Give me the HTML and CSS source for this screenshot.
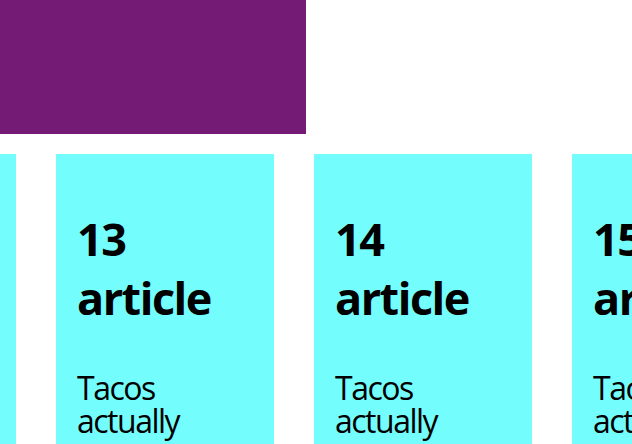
FILE: index.html
```html
<!DOCTYPE html>
<html>
<head>
<meta charset="utf-8">
<link rel="stylesheet" href="styles.css">
</head>
<body>
<div class="banner"></div>
<div class="track">
  <article class="card"><h2>12 article</h2><p>Tacos actually</p></article>
  <article class="card"><h2>13 article</h2><p>Tacos actually</p></article>
  <article class="card"><h2>14 article</h2><p>Tacos actually</p></article>
  <article class="card"><h2>15 article</h2><p>Tacos actually</p></article>
</div>
</body>
</html>
```
FILE: styles.css
```css
html, body { margin: 0; padding: 0; background: #fff; }
body { font-family: "Open Sans", "Noto Sans", sans-serif; color: #000; width: 632px; height: 444px; overflow: hidden; }
.banner { width: 306px; height: 134px; background: #741b76; }
.track { display: flex; gap: 40px; margin-top: 20px; margin-left: -202px; }
.card { flex: 0 0 218px; width: 218px; min-width: 0; height: 290px; overflow: hidden; background: #74fdfd; padding: 55px 40px 0 21px; box-sizing: border-box; }
.card h2 { margin: 0 0 44px; font-size: 45px; line-height: 59px; font-weight: 700; letter-spacing: -1.5px; }
.card p { margin: 0; font-size: 32px; line-height: 33px; letter-spacing: -1.5px; }
```
